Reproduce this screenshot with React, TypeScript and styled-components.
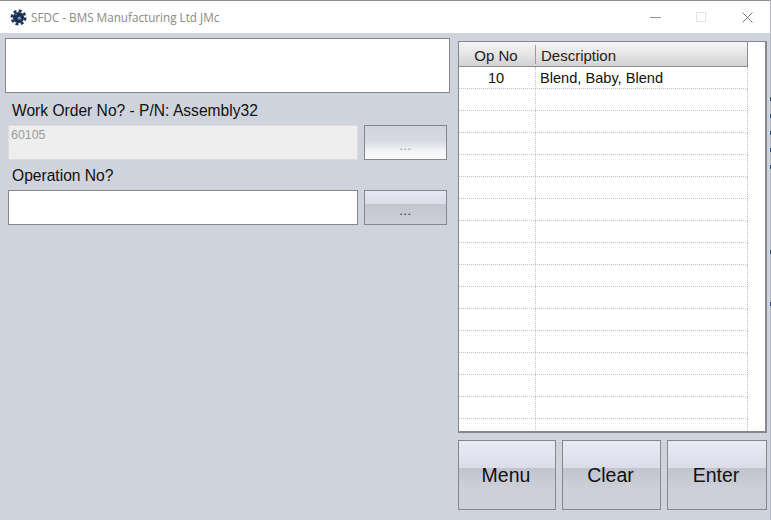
import styled, {createGlobalStyle} from "styled-components";

const GlobalStyle = createGlobalStyle`
  html, body {
    margin: 0;
    padding: 0;
    height: 100%;
    background: #cfd3dc;
    font-family: "Liberation Sans", Arial, sans-serif;
    overflow: hidden;
  }
  #root {
    height: 100%;
  }
`;

const Screen = styled.div`
  display: flex;
  width: 771px;
  height: 520px;
`;

const Window = styled.div`
  width: 770px;
  height: 520px;
  display: flex;
  flex-direction: column;
  background: #cfd3dc;
`;

const DesktopEdge = styled.div`
  width: 1px;
  height: 520px;
  background:
    linear-gradient(#2d4a80, #2d4a80) 0 97px / 1px 4px no-repeat,
    linear-gradient(#2d4a80, #2d4a80) 0 114px / 1px 4px no-repeat,
    linear-gradient(#2d4a80, #2d4a80) 0 131px / 1px 4px no-repeat,
    linear-gradient(#2d4a80, #2d4a80) 0 148px / 1px 4px no-repeat,
    linear-gradient(#2d4a80, #2d4a80) 0 165px / 1px 4px no-repeat,
    linear-gradient(#2d4a80, #2d4a80) 0 250px / 1px 4px no-repeat,
    linear-gradient(#2d4a80, #2d4a80) 0 302px / 1px 4px no-repeat,
    #b4b8c2;
`;

const TitleBar = styled.div`
  height: 32px;
  flex: none;
  display: flex;
  align-items: center;
  background: #ffffff;
  border-top: 1px solid #8f8f8f;
  padding-left: 10px;
`;

const TitleText = styled.span`
  margin-left: 4px;
  font-family: "Open Sans", "Noto Sans", sans-serif;
  font-size: 11.7px;
  color: #8a8a8a;
  white-space: nowrap;
`;

const WindowControls = styled.div`
  margin-left: auto;
  display: flex;
  align-items: center;
`;

const ControlSlot = styled.div`
  width: 46px;
  height: 32px;
  display: flex;
  align-items: center;
  justify-content: center;
`;

const Body = styled.div`
  flex: 1;
  display: flex;
  min-height: 0;
`;

const LeftPane = styled.div`
  width: 453px;
  flex: none;
  padding: 5px 0 0 5px;
  box-sizing: border-box;
`;

const MessageBox = styled.div`
  width: 445px;
  height: 55px;
  box-sizing: border-box;
  background: #ffffff;
  border: 1px solid #85878c;
`;

const FieldLabel = styled.div<{$tight?: boolean}>`
  margin: ${p => (p.$tight ? "6px" : "8px")} 0 0 7px;
  height: 24px;
  line-height: 19px;
  font-size: 15.6px;
  color: #111111;
  white-space: nowrap;
`;

const FieldRow = styled.div`
  margin-left: 3px;
  display: flex;
  gap: 6px;
  height: 35px;
`;

const Input = styled.div<{$disabled?: boolean}>`
  width: 350px;
  box-sizing: border-box;
  padding: 2px 2px;
  font-size: 12.4px;
  line-height: 14px;
  color: #9a9a9a;
  background: ${p => (p.$disabled ? "#eeeeee" : "#ffffff")};
  border: 1px solid ${p => (p.$disabled ? "#dcdcdc" : "#85878c")};
`;

const LookupButton = styled.div<{$enabled?: boolean}>`
  width: 83px;
  box-sizing: border-box;
  display: flex;
  align-items: center;
  justify-content: center;
  padding-top: 6px;
  font-size: 12px;
  letter-spacing: 0.6px;
  color: ${p => (p.$enabled ? "#222222" : "#8a8a8a")};
  border: 1px solid #85878c;
  background: ${p =>
    p.$enabled
      ? "linear-gradient(#e6e8f3 0%, #d9dbe6 40%, #c3c5ce 40%, #cdcfd9 100%)"
      : "linear-gradient(#cfd3dc 0%, #d8dbe2 45%, #f6f7f9 80%, #fcfcfd 100%)"};
`;

const RightPane = styled.div`
  width: 309px;
  margin-left: 5px;
  padding-top: 8px;
  display: flex;
  flex-direction: column;
`;

const Grid = styled.div`
  height: 392px;
  box-sizing: border-box;
  background: #ffffff;
  border: 1px solid #85878c;
  border-width: 1px 2px 2px 1px;
  overflow: hidden;
`;

const GridInner = styled.div`
  width: 289px;
`;

const HeaderRow = styled.div`
  display: grid;
  grid-template-columns: 77px 1fr;
  height: 25px;
  box-sizing: border-box;
  align-items: center;
  font-size: 15px;
  color: #222222;
  background: linear-gradient(#f5f5f5 0%, #e8e8e8 45%, #d2d2d2 100%);
  border-bottom: 1px solid #8c8c8c;
  border-right: 1px solid #8c8c8c;
`;

const HeaderCell = styled.div<{$center?: boolean}>`
  height: 19px;
  line-height: 22px;
  padding: ${p => (p.$center ? "0 2px 0 0" : "0 0 0 5px")};
  text-align: ${p => (p.$center ? "center" : "left")};
  ${p => (p.$center ? "border-right: 1px solid #9c9c9c;" : "")}
`;

const DataRow = styled.div`
  display: grid;
  grid-template-columns: 77px 1fr;
  height: 22px;
  box-sizing: border-box;
  font-size: 14.6px;
  line-height: 22px;
  color: #111111;
  border-bottom: 1px dotted #c4c4c4;
  border-right: 1px dotted #c4c4c4;
`;

const DataCell = styled.div<{$center?: boolean}>`
  padding: ${p => (p.$center ? "0 2px 0 0" : "0 0 0 4px")};
  text-align: ${p => (p.$center ? "center" : "left")};
  ${p => (p.$center ? "border-right: 1px dotted #c4c4c4;" : "")}
`;

const ActionBar = styled.div`
  margin-top: 7px;
  display: grid;
  grid-template-columns: 98px 99px 100px;
  column-gap: 6px;
  height: 70px;
`;

const ActionButton = styled.div`
  box-sizing: border-box;
  display: flex;
  align-items: center;
  justify-content: center;
  padding: 1px 2px 0 0;
  font-size: 19.5px;
  color: #111111;
  border: 1px solid #85878c;
  background: linear-gradient(#e8eaf5 0%, #dadce8 40%, #c2c4cd 40%, #cdcfd9 70%, #cdcfd9 100%);
`;

const GearIcon = () => (
  <svg width="17" height="17" viewBox="0 0 17 17">
    <circle cx="8.5" cy="8.5" r="5.6" fill="#1a3054" />
    <circle cx="8.5" cy="8.5" r="6.8" fill="none" stroke="#1a3054" strokeWidth="2.4" strokeDasharray="3 2.34" />
    <circle cx="9.4" cy="9.2" r="1.7" fill="#7f93b0" />
    <circle cx="6" cy="5.6" r="0.9" fill="#4d6587" />
  </svg>
);

const rows = Array.from({length: 16}, (_, i) => i);

export default function App() {
  return (
    <Screen>
      <GlobalStyle />
      <Window>
        <TitleBar>
          <GearIcon />
          <TitleText>SFDC - BMS Manufacturing Ltd JMc</TitleText>
          <WindowControls>
            <ControlSlot>
              <svg width="11" height="11" viewBox="0 0 11 11">
                <path d="M0 5.5h11" stroke="#8c8c8c" strokeWidth="1" />
              </svg>
            </ControlSlot>
            <ControlSlot>
              <svg width="11" height="11" viewBox="0 0 11 11">
                <rect x="0.5" y="0.5" width="9" height="9" fill="none" stroke="#e4e4e4" />
              </svg>
            </ControlSlot>
            <ControlSlot>
              <svg width="11" height="11" viewBox="0 0 11 11">
                <path d="M0.5 0.5l10 10M10.5 0.5l-10 10" stroke="#7a7a7a" strokeWidth="1" />
              </svg>
            </ControlSlot>
          </WindowControls>
        </TitleBar>
        <Body>
          <LeftPane>
            <MessageBox />
            <FieldLabel>Work Order No? - P/N: Assembly32</FieldLabel>
            <FieldRow>
              <Input $disabled>60105</Input>
              <LookupButton>...</LookupButton>
            </FieldRow>
            <FieldLabel $tight>Operation No?</FieldLabel>
            <FieldRow>
              <Input />
              <LookupButton $enabled>...</LookupButton>
            </FieldRow>
          </LeftPane>
          <RightPane>
            <Grid>
              <GridInner>
                <HeaderRow>
                  <HeaderCell $center>Op No</HeaderCell>
                  <HeaderCell>Description</HeaderCell>
                </HeaderRow>
                <DataRow>
                  <DataCell $center>10</DataCell>
                  <DataCell>Blend, Baby, Blend</DataCell>
                </DataRow>
                {rows.map(i => (
                  <DataRow key={i}>
                    <DataCell $center />
                    <DataCell />
                  </DataRow>
                ))}
              </GridInner>
            </Grid>
            <ActionBar>
              <ActionButton>Menu</ActionButton>
              <ActionButton>Clear</ActionButton>
              <ActionButton>Enter</ActionButton>
            </ActionBar>
          </RightPane>
        </Body>
      </Window>
      <DesktopEdge />
    </Screen>
  );
}
